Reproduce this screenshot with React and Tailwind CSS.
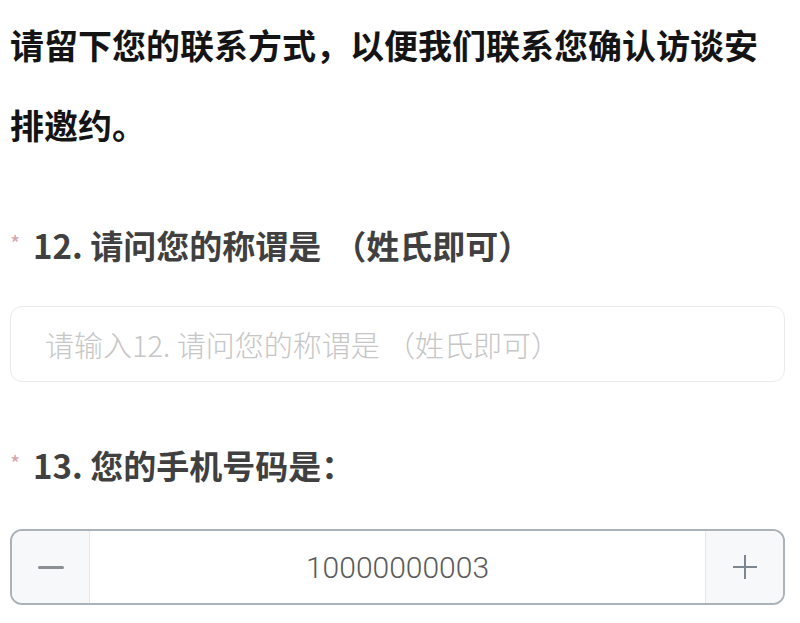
import React, { useState } from 'react';

const font = { fontFamily: '"Noto Sans CJK SC", "Noto Sans", sans-serif' };

function Label({ children }) {
  return (
    <div className="flex items-center h-[40px] text-[33px] font-bold text-[#404040] leading-[40px]">
      <span className="text-[22px] text-[#d4a5aa] w-[23px] -mt-[6px] font-normal">*</span>
      <span>{children}</span>
    </div>
  );
}

export default function App() {
  const [name, setName] = useState('');
  const [phone, setPhone] = useState(10000000003);

  return (
    <div style={font} className="bg-white min-h-[623px] px-[10px] pt-[5px] overflow-hidden">
      <p className="text-[34px] leading-[80px] font-bold text-[#141414]">
        请留下您的联系方式，以便我们联系您确认访谈安排邀约。
      </p>

      <div className="mt-[60px]">
        <Label>
          12. 请问您的称谓是<span className="ml-[12px]">（姓氏即可）</span>
        </Label>
      </div>

      <input
        value={name}
        onChange={e => setName(e.target.value)}
        placeholder="请输入12. 请问您的称谓是 （姓氏即可）"
        className="mt-[41px] block w-[775px] h-[76px] rounded-[12px] border-[1.5px] border-[#ebebeb] px-[34px] text-[29px] font-light text-[#333] placeholder:text-[#c6c6c6] outline-none"
      />

      <div className="mt-[63px]">
        <Label>13. 您的手机号码是：</Label>
      </div>

      <div className="mt-[44px] flex w-[775px] h-[76px] rounded-[12px] border-2 border-[#aab2ba] overflow-hidden">
        <button
          onClick={() => setPhone(p => p - 1)}
          className="w-[78px] flex items-center justify-center bg-[#f7f8fa] border-r border-[#e6e8eb]"
        >
          <span className="block w-[26px] h-[3px] rounded bg-[#8a8f94]" />
        </button>
        <div className="flex-1 flex items-center justify-center text-[30px] text-[#5a5a5a]" style={{ fontFamily: 'Roboto, "Noto Sans", sans-serif', fontWeight: 300 }}>
          {phone}
        </div>
        <button
          onClick={() => setPhone(p => p + 1)}
          className="w-[78px] flex items-center justify-center bg-[#f7f8fa] border-l border-[#e6e8eb]"
        >
          <svg width="28" height="28" viewBox="0 0 28 28">
            <path d="M14 2v24M2 14h24" stroke="#7d868e" strokeWidth="2" />
          </svg>
        </button>
      </div>
    </div>
  );
}
